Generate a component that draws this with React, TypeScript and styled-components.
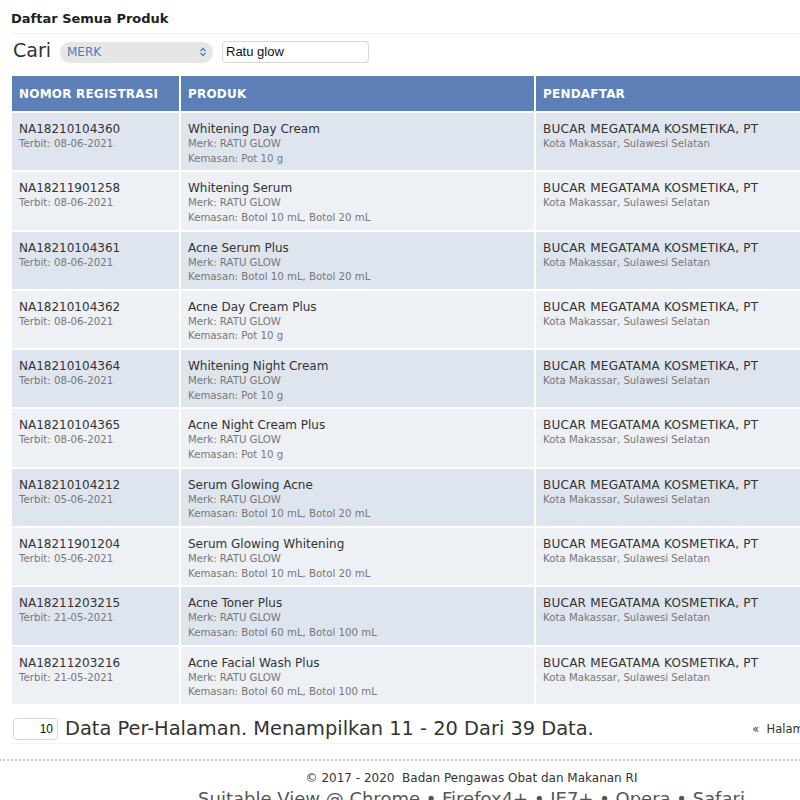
import React from "react";
import styled, { createGlobalStyle } from "styled-components";

const Global = createGlobalStyle`
  html, body { margin: 0; padding: 0; background: #fff; overflow: hidden; }
  body { font-family: "DejaVu Sans", Verdana, sans-serif; color: #333; }
`;

const Page = styled.div`
  width: 944px;
  padding: 0 12px 0 11px;
  box-sizing: border-box;
`;

const Title = styled.h1`
  margin: 0;
  padding: 11px 0 7px 0;
  font-size: 13px;
  font-weight: bold;
  color: #222;
  border-bottom: 1px solid #f2f2f2;
`;

const SearchBar = styled.div`
  display: flex;
  align-items: center;
  height: 30px;
  padding-left: 2px;
  margin-top: 2px;
`;

const SearchLabel = styled.span`
  font-size: 19px;
  color: #333;
  margin-right: 9px;
  margin-top: -2px;
`;

const Select = styled.div`
  width: 153px;
  height: 21px;
  border-radius: 10px;
  background: #e6e6e6;
  display: flex;
  align-items: center;
  justify-content: space-between;
  padding: 0 6px 0 7px;
  box-sizing: border-box;
  font-size: 12px;
  color: #4a7cc4;
  margin-top: 2px;
`;

const Input = styled.div`
  width: 147px;
  height: 22px;
  margin-left: 9px;
  margin-top: 1px;
  border: 1px solid #d6d6d6;
  border-radius: 4px;
  box-sizing: border-box;
  display: flex;
  align-items: center;
  padding-left: 3px;
  font-family: "Liberation Sans", Arial, sans-serif;
  color: #111;
  font-size: 13px;
`;

const Table = styled.div`
  margin-top: 10px;
  margin-left: 1px;
  display: grid;
  grid-template-columns: 167px 353px 1fr;
  column-gap: 2px;
  row-gap: 2px;
`;

const HeadCell = styled.div`
  background: #5b7fb6;
  color: #fff;
  font-weight: bold;
  font-size: 12px;
  height: 35px;
  display: flex;
  align-items: center;
  padding-left: 7px;
  letter-spacing: 0.2px;
`;

const Cell = styled.div<{ $odd: boolean }>`
  background: ${(p) => (p.$odd ? "#dfe5ee" : "#edf0f5")};
  height: 57.3px;
  padding: 9px 7px 0 7px;
  box-sizing: border-box;
  display: flex;
  flex-direction: column;
`;

const Main = styled.div<{ $wide?: boolean }>`
  font-size: 12px;
  color: #333;
  line-height: 15px;
  letter-spacing: ${(p) => (p.$wide ? "0.25px" : "0")};
`;

const Sub = styled.div`
  font-size: 10.2px;
  color: #777;
  line-height: 14.5px;
`;

const Footer = styled.div`
  display: flex;
  align-items: center;
  margin-top: 11px;
  padding-left: 2px;
  height: 28px;
  border-bottom: 1px solid #f4f4f4;
`;

const PerPage = styled.div`
  width: 45px;
  height: 22px;
  border: 1px solid #d6d6d6;
  border-radius: 4px;
  box-sizing: border-box;
  display: flex;
  align-items: center;
  justify-content: flex-end;
  padding-right: 4px;
  font-size: 12px;
  color: #111;
  font-family: "Liberation Sans", Arial, sans-serif;
`;

const Info = styled.span`
  font-size: 19.4px;
  color: #333;
  margin-left: 7px;
`;

const Pager = styled.span`
  margin-left: auto;
  font-size: 11.5px;
  color: #333;
  position: relative;
  left: -114px;
`;

const Dotted = styled.div`
  margin-top: 15px;
  margin-left: -11px;
  margin-right: -12px;
  border-top: 2px dotted #cfcfcf;
`;

const Copy = styled.div`
  text-align: center;
  font-size: 12px;
  color: #333;
  margin-top: 10px;
  white-space: pre;
`;

const Suitable = styled.div`
  text-align: center;
  font-size: 18px;
  color: #555;
  margin-top: 3px;
  white-space: pre;
`;

const rows = [
  ["NA18210104360", "08-06-2021", "Whitening Day Cream", "Pot 10 g"],
  ["NA18211901258", "08-06-2021", "Whitening Serum", "Botol 10 mL, Botol 20 mL"],
  ["NA18210104361", "08-06-2021", "Acne Serum Plus", "Botol 10 mL, Botol 20 mL"],
  ["NA18210104362", "08-06-2021", "Acne Day Cream Plus", "Pot 10 g"],
  ["NA18210104364", "08-06-2021", "Whitening Night Cream", "Pot 10 g"],
  ["NA18210104365", "08-06-2021", "Acne Night Cream Plus", "Pot 10 g"],
  ["NA18210104212", "05-06-2021", "Serum Glowing Acne", "Botol 10 mL, Botol 20 mL"],
  ["NA18211901204", "05-06-2021", "Serum Glowing Whitening", "Botol 10 mL, Botol 20 mL"],
  ["NA18211203215", "21-05-2021", "Acne Toner Plus", "Botol 60 mL, Botol 100 mL"],
  ["NA18211203216", "21-05-2021", "Acne Facial Wash Plus", "Botol 60 mL, Botol 100 mL"],
];

export default function App() {
  return (
    <Page>
      <Global />
      <Title>Daftar Semua Produk</Title>
      <SearchBar>
        <SearchLabel>Cari</SearchLabel>
        <Select>
          <span>MERK</span>
          <svg width="8" height="10" viewBox="0 0 8 10">
            <path d="M1.5 4 L4 1.5 L6.5 4 M1.5 6 L4 8.5 L6.5 6" stroke="#4a7cc4" strokeWidth="1.3" fill="none" />
          </svg>
        </Select>
        <Input>Ratu glow</Input>
      </SearchBar>
      <Table>
        <HeadCell>NOMOR REGISTRASI</HeadCell>
        <HeadCell>PRODUK</HeadCell>
        <HeadCell>PENDAFTAR</HeadCell>
        {rows.map((r, i) => {
          const odd = i % 2 === 0;
          return (
            <React.Fragment key={r[0]}>
              <Cell $odd={odd}>
                <Main>{r[0]}</Main>
                <Sub>Terbit: {r[1]}</Sub>
              </Cell>
              <Cell $odd={odd}>
                <Main>{r[2]}</Main>
                <Sub>Merk: RATU GLOW</Sub>
                <Sub>Kemasan: {r[3]}</Sub>
              </Cell>
              <Cell $odd={odd}>
                <Main $wide>BUCAR MEGATAMA KOSMETIKA, PT</Main>
                <Sub>Kota Makassar, Sulawesi Selatan</Sub>
              </Cell>
            </React.Fragment>
          );
        })}
      </Table>
      <Footer>
        <PerPage>10</PerPage>
        <Info>Data Per-Halaman. Menampilkan 11 - 20 Dari 39 Data.</Info>
        <Pager>«&nbsp; Halaman</Pager>
      </Footer>
      <Dotted />
      <Copy>{"© 2017 - 2020  Badan Pengawas Obat dan Makanan RI"}</Copy>
      <Suitable>{"Suitable View @ Chrome • Firefox4+ • IE7+ • Opera • Safari"}</Suitable>
    </Page>
  );
}
